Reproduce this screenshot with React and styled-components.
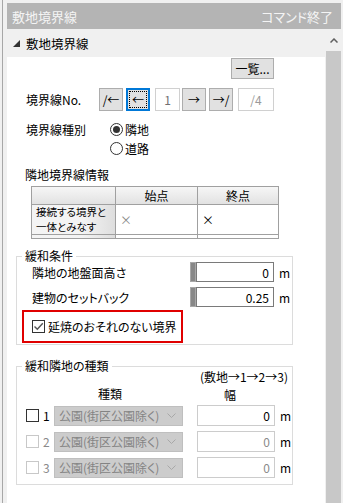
import styled, { createGlobalStyle } from 'styled-components';

const GlobalStyle = createGlobalStyle`
  html, body {
    margin: 0;
    padding: 0;
    background: #f0f0f0;
  }
  body {
    font-family: "Noto Sans CJK JP", "Noto Sans", sans-serif;
    font-size: 12px;
    color: #000;
    font-feature-settings: "palt";
    overflow: hidden;
  }
`;

const Window = styled.div`
  margin-left: 2px;
  border-left: 1px solid #a7a7a7;
  padding: 3px 2px 0 4px;
  height: 500px;
  display: flex;
  flex-direction: column;
`;

const TitleBar = styled.div`
  height: 26px;
  background: #b4b4b4;
  color: #f4f4f4;
  display: flex;
  align-items: center;
  justify-content: space-between;
  padding: 0 8px 0 5px;
  font-size: 13px;
  margin-bottom: 1px;
`;

const Body = styled.div`
  flex: 1;
  display: flex;
  gap: 1px;
  min-height: 0;
`;

const Panel = styled.div`
  width: 318px;
  display: flex;
  flex-direction: column;
`;

const SectionHeader = styled.div`
  height: 27px;
  display: flex;
  align-items: center;
  padding-left: 6px;
  gap: 6px;
  background: #f0f0f0;
  font-size: 12.5px;
`;

const Scrollbar = styled.div`
  width: 15px;
  display: flex;
  flex-direction: column;
  background: #f0f0f0;
`;

const ScrollArrow = styled.div`
  height: 21px;
  display: flex;
  align-items: center;
  justify-content: center;
`;

const ScrollThumb = styled.div`
  flex: 1;
  background: #c8c8c8;
`;

const Content = styled.div`
  flex: 1;
  background: #fff;
  padding-top: 1px;
`;

const TopRow = styled.div`
  display: flex;
  justify-content: flex-end;
  padding-right: 51px;
`;

const Button = styled.button`
  box-sizing: border-box;
  height: ${p => p.$h || 21}px;
  width: ${p => p.$w}px;
  margin-left: ${p => p.$ml || 0}px;
  padding: 0;
  background: #e1e1e1;
  border: 1px solid #adadad;
  font-family: inherit;
  font-size: 12px;
  color: #000;
  display: flex;
  align-items: center;
  justify-content: center;
  outline: ${p => (p.$focus ? '1px dotted #000' : 'none')};
  outline-offset: -4px;
  ${p => p.$focus && 'border: 2px solid #0078d7;'}
`;

const NavRow = styled.div`
  display: flex;
  align-items: center;
  height: 23px;
  margin-top: 9px;
  padding-left: 19px;
`;

const Label = styled.div`
  width: ${p => p.$w}px;
  flex-shrink: 0;
  line-height: ${p => p.$lh || 'normal'};
`;

const SmallBox = styled.div`
  box-sizing: border-box;
  width: ${p => p.$w}px;
  height: 23px;
  margin-left: ${p => p.$ml || 0}px;
  border: 1px solid #d0d0d0;
  display: flex;
  align-items: center;
  justify-content: center;
  color: ${p => p.$color || '#707070'};
  font-size: 12px;
`;

const TypeRow = styled.div`
  display: flex;
  margin-top: 9px;
  padding-left: 19px;
`;

const RadioGroup = styled.div`
  display: flex;
  flex-direction: column;
`;

const RadioRow = styled.div`
  height: 19px;
  display: flex;
  align-items: center;
  gap: 2px;
`;

const Radio = styled.span`
  box-sizing: border-box;
  width: 13px;
  height: 13px;
  border-radius: 50%;
  border: 1px solid #333;
  display: flex;
  align-items: center;
  justify-content: center;
  &::after {
    content: '';
    width: 7px;
    height: 7px;
    border-radius: 50%;
    background: ${p => (p.$on ? '#333' : 'transparent')};
  }
`;

const InfoTitle = styled.div`
  margin-top: 9px;
  padding-left: 18px;
  line-height: 16px;
`;

const Table = styled.div`
  margin: 3px 0 0 24px;
  width: 248px;
  border: 1px solid #a0a0a0;
  display: grid;
  grid-template-columns: 84px 82px 1fr;
  grid-template-rows: 18px 30px 3px;
  box-sizing: border-box;
`;

const Cell = styled.div`
  border-right: ${p => (p.$last ? 'none' : '1px solid #a0a0a0')};
  border-bottom: ${p => (p.$bottom ? 'none' : '1px solid #a0a0a0')};
  background: ${p =>
    p.$head
      ? 'linear-gradient(#f6f6f6, #e2e2e2)'
      : p.$rowHead
      ? 'linear-gradient(to right, #f4f4f4 60%, #dedede)'
      : '#fff'};
  display: flex;
  flex-direction: ${p => (p.$stack ? 'column' : 'row')};
  align-items: ${p => (p.$stack ? 'flex-start' : 'center')};
  justify-content: center;
  justify-content: ${p => (p.$center || p.$stack ? 'center' : 'flex-start')};
  padding-left: ${p => (p.$center ? 0 : 4)}px;
  font-size: ${p => (p.$small ? 10.5 : 12)}px;
  line-height: ${p => (p.$small ? '14.5px' : '14px')};
  color: ${p => p.$color || '#000'};
  overflow: hidden;
`;

const Group = styled.fieldset`
  margin: ${p => p.$mt}px 32px 0 9px;
  padding: 0 0 ${p => p.$pb}px 0;
  border: 1px solid #dcdcdc;
  min-width: 0;
`;

const Legend = styled.legend`
  margin-left: 5px;
  padding: 0 3px;
  line-height: 14px;
  font-size: 12px;
`;

const FieldRow = styled.div`
  display: flex;
  align-items: center;
  height: 20px;
  margin-top: ${p => p.$mt}px;
  padding-left: 15px;
`;

const Handle = styled.span`
  box-sizing: border-box;
  width: 6px;
  height: 20px;
  background: #888;
  border: 1px solid #a8a8a8;
`;

const NumBox = styled.div`
  box-sizing: border-box;
  width: 78px;
  height: ${p => p.$h || 20}px;
  border: 1px solid ${p => p.$border || '#7a7a7a'};
  display: flex;
  align-items: center;
  justify-content: flex-end;
  padding-right: 4px;
  font-size: 12px;
  background: #fff;
`;

const Unit = styled.span`
  margin-left: 5px;
  font-size: 12px;
  color: #000;
`;

const Highlight = styled.div`
  margin: 3px 0 0 5px;
  width: 161px;
  height: 33px;
  box-sizing: border-box;
  border: 2px solid #e00000;
  display: flex;
  align-items: center;
  padding-left: 8px;
  gap: 3px;
`;

const Check = styled.span`
  box-sizing: border-box;
  width: 13px;
  height: 13px;
  border: 1px solid ${p => (p.$disabled ? '#c8c8c8' : '#333')};
  display: flex;
  align-items: center;
  justify-content: center;
  background: #fff;
`;

const RangeNote = styled.div`
  margin-top: -4px;
  line-height: 16px;
  text-align: right;
  padding-right: 4px;
  font-size: 12px;
`;

const HeadRow = styled.div`
  display: flex;
  height: 16px;
  align-items: center;
`;

const HeadText = styled.span`
  margin-left: ${p => p.$ml}px;
  margin-top: ${p => p.$mt || 0}px;
`;

const KindList = styled.div`
  display: flex;
  flex-direction: column;
  gap: 5px;
  margin-top: 4px;
`;

const KindRow = styled.div`
  display: flex;
  align-items: center;
  height: 21px;
  padding-left: 9px;
  color: ${p => (p.$disabled ? '#8a8a8a' : '#000')};
`;

const Num = styled.span`
  width: 15px;
  padding-left: 4px;
  box-sizing: border-box;
`;

const Combo = styled.div`
  box-sizing: border-box;
  width: 129px;
  height: 20px;
  margin-right: 14px;
  background: #cccccc;
  border: 1px solid #bfbfbf;
  color: #838383;
  display: flex;
  align-items: center;
  justify-content: space-between;
  padding: 0 6px 0 4px;
  font-size: 12px;
`;

const Chevron = () => (
  <svg width="9" height="5" viewBox="0 0 9 5">
    <path d="M0.5 0.5 L4.5 4.5 L8.5 0.5" fill="none" stroke="#a8a8a8" strokeWidth="1" />
  </svg>
);

const Tick = () => (
  <svg width="11" height="11" viewBox="0 0 11 11">
    <path d="M1.5 5.5 L4.3 8.3 L9.8 2.2" fill="none" stroke="#555" strokeWidth="1.4" />
  </svg>
);

const kinds = [
  { n: 1, disabled: false },
  { n: 2, disabled: true },
  { n: 3, disabled: true },
];

export default function App() {
  return (
    <>
      <GlobalStyle />
      <Window>
        <TitleBar>
          <span>敷地境界線</span>
          <span>コマンド終了</span>
        </TitleBar>
        <Body>
          <Panel>
            <SectionHeader>
              <svg width="7" height="7" viewBox="0 0 7 7">
                <path d="M7 0 L7 7 L0 7 Z" fill="#333" />
              </svg>
              <span>敷地境界線</span>
            </SectionHeader>
            <Content>
              <TopRow>
                <Button $w={43}>一覧...</Button>
              </TopRow>
              <NavRow>
                <Label $w={73}>境界線No.</Label>
                <Button $w={24} $h={23}>/←</Button>
                <Button $w={24} $h={23} $ml={3} $focus>←</Button>
                <SmallBox $w={25} $ml={5}>1</SmallBox>
                <Button $w={24} $h={23} $ml={2}>→</Button>
                <Button $w={24} $h={23} $ml={3}>→/</Button>
                <SmallBox $w={36} $ml={5} $color="#9a9a9a">/4</SmallBox>
              </NavRow>
              <TypeRow>
                <Label $w={84} $lh="19px">境界線種別</Label>
                <RadioGroup>
                  <RadioRow>
                    <Radio $on />
                    <span>隣地</span>
                  </RadioRow>
                  <RadioRow>
                    <Radio />
                    <span>道路</span>
                  </RadioRow>
                </RadioGroup>
              </TypeRow>
              <InfoTitle>隣地境界線情報</InfoTitle>
              <Table>
                <Cell $head />
                <Cell $head $center>始点</Cell>
                <Cell $head $center $last>終点</Cell>
                <Cell $rowHead $small $stack>
                  <span>接続する境界と</span>
                  <span>一体とみなす</span>
                </Cell>
                <Cell $color="#8a8a8a">×</Cell>
                <Cell $last>×</Cell>
                <Cell $rowHead $bottom />
                <Cell $bottom />
                <Cell $bottom $last />
              </Table>
              <Group $mt={10} $pb={1}>
                <Legend>緩和条件</Legend>
                <FieldRow $mt={-1}>
                  <Label $w={158}>隣地の地盤面高さ</Label>
                  <Handle />
                  <NumBox>0</NumBox>
                  <Unit>m</Unit>
                </FieldRow>
                <FieldRow $mt={5}>
                  <Label $w={158}>建物のセットバック</Label>
                  <Handle />
                  <NumBox>0.25</NumBox>
                  <Unit>m</Unit>
                </FieldRow>
                <Highlight>
                  <Check>
                    <Tick />
                  </Check>
                  <span>延焼のおそれのない境界</span>
                </Highlight>
              </Group>
              <Group $mt={14} $pb={6}>
                <Legend>緩和隣地の種類</Legend>
                <RangeNote>(敷地→1→2→3)</RangeNote>
                <HeadRow>
                  <HeadText $ml={81}>種類</HeadText>
                  <HeadText $ml={102} $mt={3}>幅</HeadText>
                </HeadRow>
                <KindList>
                  {kinds.map(k => (
                    <KindRow key={k.n} $disabled={k.disabled}>
                      <Check $disabled={k.disabled} />
                      <Num>{k.n}</Num>
                      <Combo>
                        <span>公園(街区公園除く)</span>
                        <Chevron />
                      </Combo>
                      <NumBox $h={21} $border="#cccccc">0</NumBox>
                      <Unit>m</Unit>
                    </KindRow>
                  ))}
                </KindList>
              </Group>
            </Content>
          </Panel>
          <Scrollbar>
            <ScrollArrow>
              <svg width="8" height="5" viewBox="0 0 8 5">
                <path d="M0.5 4.5 L4 1 L7.5 4.5" fill="none" stroke="#606060" strokeWidth="1.5" />
              </svg>
            </ScrollArrow>
            <ScrollThumb />
          </Scrollbar>
        </Body>
      </Window>
    </>
  );
}
